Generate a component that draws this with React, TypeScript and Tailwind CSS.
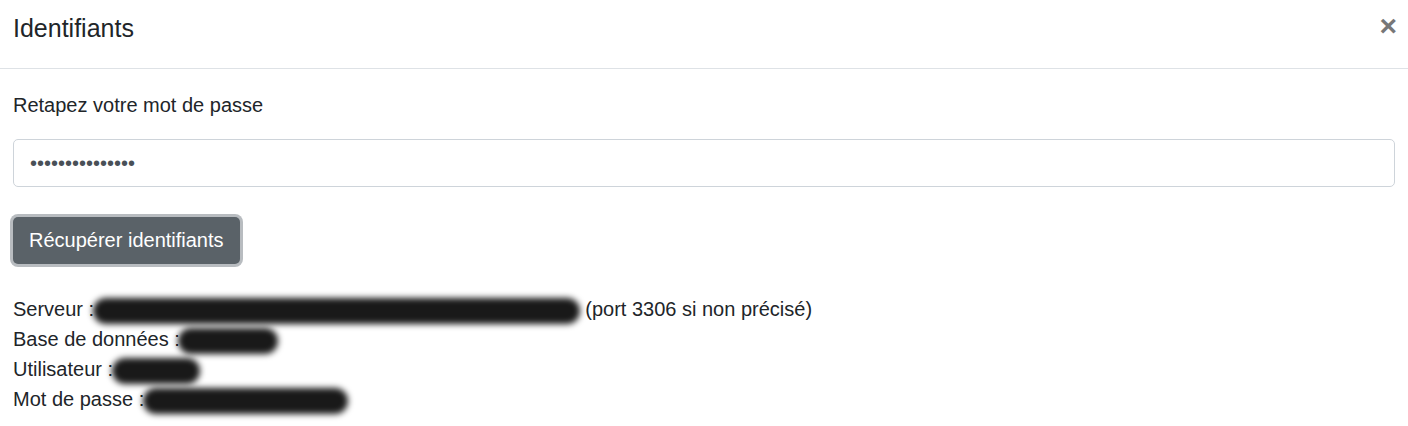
import React from "react";

function Redacted({ width }: { width: number }) {
  return (
    <span className="relative ml-[-7px] inline-block h-[20px] align-middle" style={{ width }}>
      <span className="absolute inset-x-0 top-[-3px] bottom-[-3px] rounded-full bg-black/90 blur-[3px]" />
    </span>
  );
}

export default function App() {
  return (
    <div className="w-[1408px] h-[426px] bg-white text-[#212529] font-['Liberation_Sans',Arial,sans-serif] text-[20px] leading-[30px]">
      <div className="flex h-[69px] items-start justify-between border-b border-[#dee2e6] px-[13px]">
        <h5 className="mt-[12px] text-[25px] leading-[32px]">Identifiants</h5>
        <button className="mt-[8px] mr-[-2px] text-[30px] font-bold leading-[36px] text-[#777]">×</button>
      </div>
      <div className="px-[13px] pt-[21px]">
        <p>Retapez votre mot de passe</p>
        <input
          type="password"
          readOnly
          value="•••••••••••••••"
          className="mt-[19px] block h-[48px] w-full rounded-[5px] border border-[#ced4da] px-[16px] text-[20px] text-[#495057] outline-none"
        />
        <button className="mt-[30px] rounded-[5px] bg-[#5a6268] px-[16px] py-[7px] text-[20px] leading-[33px] text-white ring-[3px] ring-[#b8bcc0]">
          Récupérer identifiants
        </button>
        <div className="mt-[30px]">
          <div>
            Serveur : <Redacted width={487} /> (port 3306 si non précisé)
          </div>
          <div>
            Base de données : <Redacted width={100} />
          </div>
          <div>
            Utilisateur : <Redacted width={88} />
          </div>
          <div>
            Mot de passe : <Redacted width={205} />
          </div>
        </div>
      </div>
    </div>
  );
}
